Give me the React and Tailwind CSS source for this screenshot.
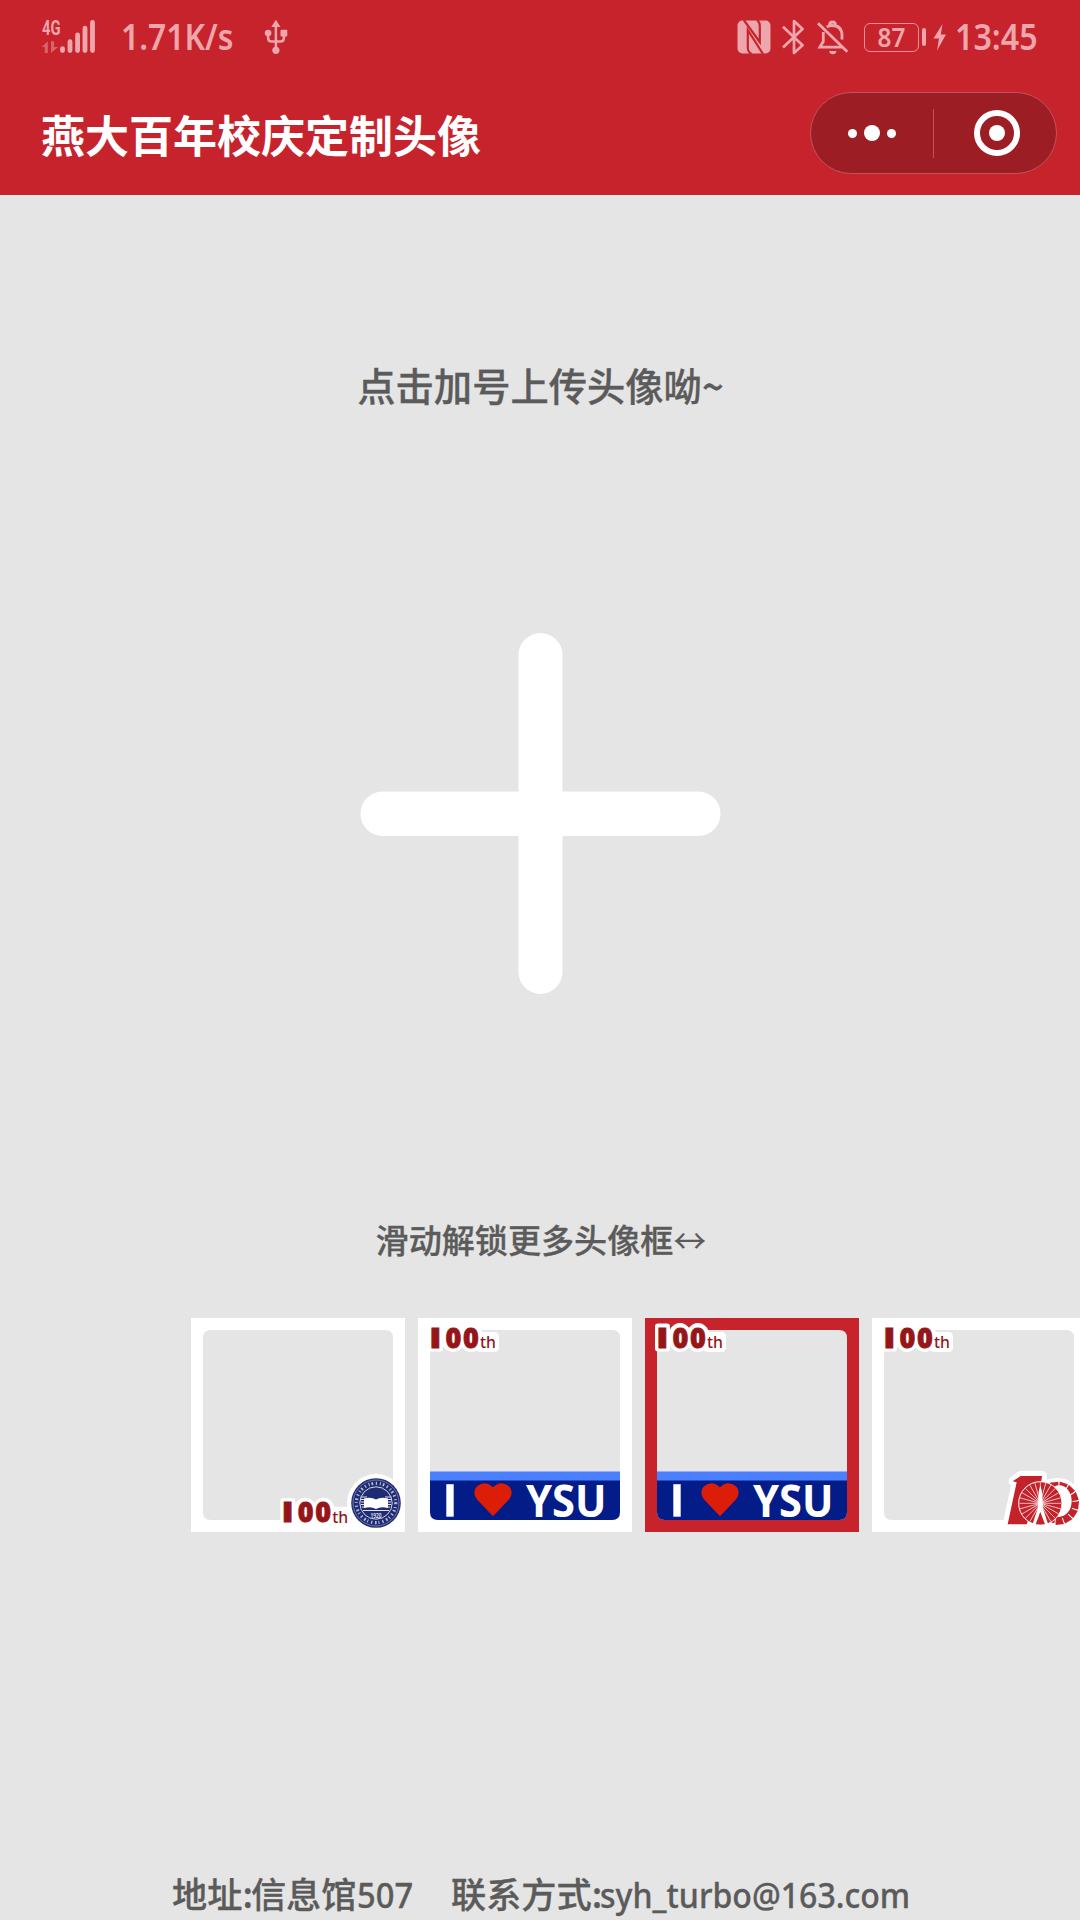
import React from "react";

const INK = "#eda6ab";
const CJK = "font-['Noto_Sans_CJK_SC',sans-serif]";

function Signal() {
  return (
    <svg className="h-[40px] w-[56px] shrink-0" viewBox="42 16 56 40" fill={INK}>
      <text x="42" y="33.5" fontFamily="Roboto, sans-serif" fontWeight="700" fontSize="20" textLength="18.500" lengthAdjust="spacingAndGlyphs">4G</text>
      <g fill="#dc626a">
        <path d="M41.800 46 47.800 40.200V52h-3v-6z" />
        <path d="M51 40.200h3V46h4.200L51 52z" />
      </g>
      <g stroke={INK} strokeWidth="4.800" strokeLinecap="round">
        <path d="M62.500 47.600v2M70 40.600v9M77.600 34v15.600M85 27.200v22.400M92.500 21.400v28.200" />
      </g>
    </svg>
  );
}

function Usb() {
  return (
    <svg className="h-[36px] w-[24px] shrink-0" viewBox="264.500 18.500 24 36" fill={INK}>
      <path d="M276.400 19.300 281 26.600h-9.200z" />
      <circle cx="276.400" cy="49.800" r="3.600" />
      <circle cx="268.600" cy="32.600" r="3.300" />
      <rect x="281" y="29.300" width="6.800" height="6.800" rx="1" />
      <path d="M276.400 25v24M268.600 33v4.400q0 3.600 3.600 3.600h8.600q3.600 0 3.600-3.600V34" fill="none" stroke={INK} strokeWidth="2.500" />
    </svg>
  );
}

function Nfc() {
  return (
    <svg className="h-[34px] w-[34px] shrink-0" viewBox="0 0 34 34">
      <rect x=".5" y=".5" width="33" height="33" rx="5" fill={INK} />
      <g fill="none" stroke="#c7232c" strokeWidth="2.200">
        <path d="M6.800 0 22.800 22V6Q22.800 2 20 0" />
        <path d="M14.500 34Q10.800 32 10.800 28V10L26 34" />
      </g>
    </svg>
  );
}

function Bluetooth() {
  return (
    <svg className="h-[36px] w-[22px] shrink-0" viewBox="782.500 18.500 22 36" fill="none" stroke={INK} strokeWidth="2.700" strokeLinejoin="round">
      <path d="M783.500 26.300 803 44.800 794.500 52.400V20.600L803 28.400 783.500 47" />
    </svg>
  );
}

function BellOff() {
  return (
    <svg className="h-[36px] w-[32px] shrink-0" viewBox="817 18 32 36" fill="none" stroke={INK} strokeWidth="2.800">
      <path d="M823.300 31v9.500L819.800 46.200h22.500M826.800 26q2.300-1.500 5.200-1.500 10 0 10 10v4" />
      <path d="M829.500 24.500q0-3.500 3-3.500t3 3.500" />
      <path d="M818 22.300 847.300 50.700" />
      <path d="M829 50h7.500q-.800 3.200-3.700 3.200T829 50z" fill={INK} stroke="none" />
    </svg>
  );
}

function StatusBar() {
  return (
    <div className="flex h-[74px] w-full items-center pl-[42px] text-[#eda6ab] font-['Noto_Sans',sans-serif] font-semibold">
      <Signal />
      <span className="ml-[23px] w-[111px] origin-left scale-x-[.885] whitespace-nowrap text-[36px] leading-none">1.71K/s</span>
      <span className="ml-[32px] flex"><Usb /></span>
      <div className="ml-[449px] flex items-center">
        <Nfc />
        <span className="ml-[11px] flex"><Bluetooth /></span>
        <span className="ml-[13px] flex"><BellOff /></span>
        <div className="ml-[15px] flex h-[29px] w-[55px] shrink-0 items-center justify-center rounded-[6px] border-[1.500px] border-[#e98f95] pb-[2px] text-[27px] leading-none"><span className="scale-x-[.900]">87</span></div>
        <div className="ml-[3px] h-[18px] w-[4px] rounded-full bg-[#eda6ab]" />
        <svg className="ml-[7px] h-[28px] w-[14px] shrink-0" viewBox="0 0 14 28" fill={INK}>
          <path d="M9.500 1 .5 15.500H6L4 27.500 13 11.500H7.800z" />
        </svg>
        <span className="ml-[8px] origin-left scale-x-[.895] whitespace-nowrap text-[36px] leading-none">13:45</span>
      </div>
    </div>
  );
}

function Capsule() {
  return (
    <div className="flex h-[82px] w-[247px] items-center rounded-full border border-[#c4525a] bg-[#9c1d24]">
      <div className="flex w-[122px] items-center justify-center gap-[7px]">
        <i className="size-[9px] rounded-full bg-white" />
        <i className="size-[16px] rounded-full bg-white" />
        <i className="size-[9px] rounded-full bg-white" />
      </div>
      <div className="h-[49px] w-px bg-[#c4525a]" />
      <div className="flex flex-1 items-center justify-center pl-[4px]">
        <div className="flex size-[46px] items-center justify-center rounded-full border-[6px] border-white">
          <i className="size-[16px] rounded-full bg-white" />
        </div>
      </div>
    </div>
  );
}

/* "100th" sticker on a thick white outline */
function Hundredth({ x = 0, y = 0 }) {
  const big = { fontFamily: "'Open Sans', sans-serif", fontWeight: 800, fontSize: 28, fill: "#951518", stroke: "#951518", strokeWidth: 0.8 };
  return (
    <g transform={`translate(${x} ${y})`}>
      <g fill="#fff">
        <rect x="10" y="5.500" width="15" height="28" rx="3" />
        <ellipse cx="35" cy="19.500" rx="12" ry="14.500" />
        <ellipse cx="53" cy="19.500" rx="12" ry="14.500" />
        <rect x="58" y="14" width="23" height="20" rx="4.500" />
      </g>
      <text {...big} transform="translate(11.300 29.600) scale(1.250 1)">I</text>
      <text {...big} x="27.400" y="29.600" textLength="15.800" lengthAdjust="spacingAndGlyphs">0</text>
      <text {...big} x="45" y="29.600" textLength="15.800" lengthAdjust="spacingAndGlyphs">0</text>
      <text x="62" y="30.300" fontFamily="'Noto Sans', sans-serif" fontWeight="500" fontSize="16" fill="#951518" textLength="16" lengthAdjust="spacingAndGlyphs">th</text>
    </g>
  );
}

function Frame({ color }) {
  return <path fill={color} fillRule="evenodd" d="M0 0H214V214H0zM20 12Q12 12 12 20V194Q12 202 20 202H194Q202 202 202 194V20Q202 12 194 12z" />;
}

function Banner() {
  const type = { fontFamily: "'Noto Sans', sans-serif", fontWeight: 700, fontSize: 45.500, fill: "#fff" };
  return (
    <g>
      <path d="M12 153.500H202V163H12z" fill="#4a80ff" />
      <path d="M12 162.500H202V194Q202 202 194 202H20Q12 202 12 194z" fill="#031c87" />
      <path d="M28.300 166.200h7.400v32.500h-7.400z" fill="#fff" />
      <path d="M75 198.200 59 181.500Q53.500 174 59 168.300 67 161.500 75 169.300 83 161.500 91 168.300 96.500 174 91 181.500z" fill="#dc1d07" />
      <text {...type} x="108" y="198.700" textLength="80.500" lengthAdjust="spacingAndGlyphs">YSU</text>
    </g>
  );
}

function Seal() {
  return (
    <g transform="translate(185 185)">
      <circle r="29" fill="#fff" />
      <circle r="24.800" fill="#202c72" />
      <circle r="23" fill="none" stroke="#8088b5" strokeWidth=".8" />
      <circle r="19.700" fill="none" stroke="#b4b9d6" strokeWidth="3.200" strokeDasharray="1.300 2.900 1 1.900 1.700 2.700" />
      <circle r="16.200" fill="none" stroke="#e4e6f2" strokeWidth=".9" />
      <path d="M-15-6H-9M9-6H15M-15-3.500H-11M11-3.500H15M-15-1H-11M11-1H15M-15 1.500H-11M11 1.500H15M-14 4H-10M10 4H14M-13 7.500H13" stroke="#dfe1ef" strokeWidth="1" />
      <path d="M-12-4.500Q-5-6.500 0-3.500 5-6.500 12-4.500V5Q5 3 0 6-5 3-12 5z" fill="#fff" />
      <text x="-5.500" y="15" fontFamily="'Noto Sans', sans-serif" fontSize="6.500" fontWeight="600" fill="#e4e6f2" textLength="11" lengthAdjust="spacingAndGlyphs">1920</text>
    </g>
  );
}

function Wheel() {
  const spokes = Array.from({ length: 24 }, (_, i) => i * 15);
  const teeth = [-98, -72, -46, -20, 6, 32, 58, 84];
  return (
    <g transform="translate(-12 -8) scale(.33333)">
      <g fill="#fff" stroke="#fff" strokeWidth="32" strokeLinejoin="round">
        <path d="M462 514 484 498H545L530 643H444L472 516z" />
        <circle cx="541" cy="580" r="58" />
        <circle cx="592" cy="580" r="60" />
      </g>
      <circle cx="592" cy="580" r="50" fill="none" stroke="#c4222b" strokeWidth="20" />
      {teeth.map((a) => (
        <path key={a} transform={`rotate(${a} 592 580)`} d="M634 566H656V592H634z" fill="#c4222b" />
      ))}
      {teeth.map((a) => (
        <path key={a} transform={`rotate(${a + 13} 592 580)`} d="M638 580H656" stroke="#fff" strokeWidth="3" />
      ))}
      <ellipse cx="598" cy="573" rx="37" ry="47" fill="#fff" />
      <path d="M458 514 482 498H546L541 540 500 643H443L470 517z" fill="#c4222b" />
      <circle cx="541" cy="580" r="65" fill="#c4222b" stroke="#fff" strokeWidth="3" />
      {spokes.map((a) => (
        <path key={a} transform={`rotate(${a} 541 580)`} d="M541 575V517" stroke="#fff" strokeWidth="2" />
      ))}
      <path d="M541 526 546 545 548 592 566 648H552L541 606 530 648H516L534 592 536 545z" fill="#fff" />
      <path d="M541 606 555 643H527z" fill="#c4222b" />
    </g>
  );
}

function Card({ color = "#fff", children }) {
  return (
    <svg className="h-[214px] w-[214px] shrink-0" viewBox="0 0 214 214">
      <Frame color={color} />
      {children}
    </svg>
  );
}

export default function App() {
  return (
    <div className={`flex h-[1920px] w-[1080px] flex-col overflow-hidden bg-[#e5e5e5] text-[#5b5b5b] ${CJK}`}>
      <header className="h-[195px] shrink-0 bg-[#c7232c]">
        <StatusBar />
        <div className="flex items-start justify-between pr-[23px] pl-[41px] pt-[18px]">
          <h1 className="pt-[18px] text-[44px] leading-[48px] font-bold whitespace-nowrap text-white">燕大百年校庆定制头像</h1>
          <Capsule />
        </div>
      </header>

      <main className="flex flex-1 flex-col items-center">
        <p className="mt-[166px] h-[48px] pl-px text-[38.300px] leading-[48px] font-medium whitespace-nowrap [-webkit-text-stroke:0.300px]">点击加号上传头像呦~</p>

        <svg className="mt-[214px] h-[381px] w-[381px] shrink-0" viewBox="350 623 381 381" fill="#fff">
          <rect x="518.500" y="633" width="44" height="361" rx="22" />
          <rect x="360.500" y="791.500" width="360" height="44.500" rx="22" />
        </svg>

        <p className="mt-[215px] h-[40px] pl-[2px] text-[33.100px] leading-[40px] font-medium whitespace-nowrap [-webkit-text-stroke:0.300px]">
          滑动解锁更多头像框<span className="font-normal [-webkit-text-stroke:0px]">↔</span>
        </p>

        <div className="mt-[59px] flex w-full gap-[13px] overflow-hidden pl-[191px]">
          <Card>
            <Seal />
            <Hundredth x={79.300} y={174.700} />
          </Card>
          <Card>
            <Hundredth />
            <Banner />
          </Card>
          <Card color="#c7232c">
            <Hundredth />
            <Banner />
          </Card>
          <Card>
            <Hundredth />
            <Wheel />
          </Card>
        </div>

        <footer className="mt-auto mb-[5px] flex h-[44px] w-full items-baseline pl-[172px] text-[35.200px] leading-[44px] font-medium whitespace-nowrap [-webkit-text-stroke:0.300px]">
          <div className="flex w-[279px] items-baseline">
            <span>地址<span className="tracking-[-2px]">:</span>信息馆</span>
            <span className="ml-px origin-left scale-x-[.950] font-['Noto_Sans',sans-serif] text-[34.400px]">507</span>
          </div>
          <span>联系方式<span className="tracking-[-2px]">:</span></span>
          <span className="origin-left scale-x-[.932] font-['Noto_Sans',sans-serif] text-[34.400px]">syh_turbo@163.com</span>
        </footer>
      </main>
    </div>
  );
}
